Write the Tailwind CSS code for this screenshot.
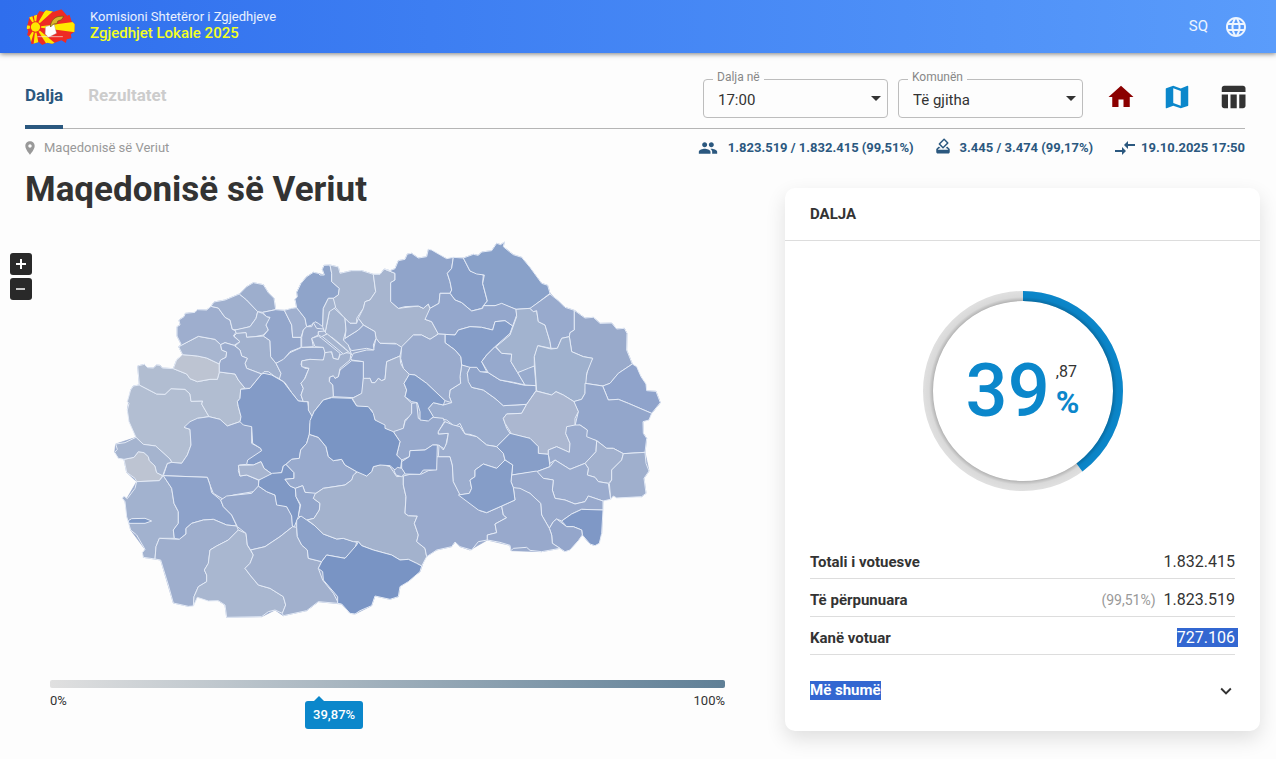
<!DOCTYPE html>
<html lang="sq">
<head>
<meta charset="utf-8">
<meta name="viewport" content="width=device-width, initial-scale=1">
<title>Zgjedhjet Lokale 2025</title>
<script src="https://cdn.jsdelivr.net/npm/@tailwindcss/browser@4"></script>
</head>
<body class="min-h-screen overflow-x-hidden bg-[#fdfdfd] font-[Roboto,sans-serif] text-[#333]">
<header class="flex h-[53px] items-center justify-between bg-linear-to-r from-[#2f6eed] to-[#5a9cfb] pr-7 pl-[25px] shadow-[0_1px_5px_rgba(0,0,0,0.5)]">
  <div class="flex items-center gap-3.5">
    <svg class="h-9 w-[51px]" viewBox="0 0 150 108" aria-hidden="true">
      <defs><clipPath id="flag"><path d="M8 40 12 25 35 17 42 6 55 9 62 4 85 8 108 1 125 20 132 17 138 36 148 46 147 68 136 76 138 88 124 91 121 102 108 94 80 104 65 101 50 108 40 99 18 106 13 84 5 78 8 66 3 57Z"/></clipPath></defs>
      <g clip-path="url(#flag)">
        <path fill="#ee2b24" d="M0 0h150v108H0z"/>
        <path fill="#ffe900" d="M30 54 0 48v14zM30 54 0 10 14 0zM30 54 22 0h15zM30 54 62 0h28zM30 54 150 38v32zM30 54 95 108H65zM30 54 24 108h16zM30 54 0 98l14 10z"/>
        <circle cx="30" cy="54" r="17" fill="#ee2b24"/><circle cx="30" cy="54" r="14" fill="#ffe900"/>
      </g>
      <path fill="#fff" stroke="#999" d="m60 53 26-7 7 27-24 12-10-10z"/>
      <path fill="#d8b72a" stroke="#665311" stroke-width="2" d="M75 48C80 28 93 20 115 22l-7 10-11 4-3 8-10 1-9 9z"/>
      <path stroke="#eee" stroke-width="2" d="M36 83h76"/>
    </svg>
    <div class="pb-1">
      <p class="text-[13px] leading-4 text-white/90">Komisioni Shtetëror i Zgjedhjeve</p>
      <p class="text-[15px] leading-4 font-medium text-[#f4ff1f]">Zgjedhjet Lokale 2025</p>
    </div>
  </div>
  <button type="button" class="flex items-center gap-4 text-[15px] text-white/90" aria-label="Gjuha: SQ">SQ
    <svg class="size-6 fill-current" viewBox="0 0 24 24"><path d="M11.99 2C6.47 2 2 6.48 2 12s4.47 10 9.99 10C17.52 22 22 17.52 22 12S17.52 2 11.99 2zm6.93 6h-2.95c-.32-1.25-.78-2.45-1.38-3.56 1.84.63 3.37 1.91 4.33 3.56zM12 4.04c.83 1.2 1.48 2.53 1.91 3.96h-3.82c.43-1.43 1.08-2.76 1.91-3.96zM4.26 14C4.1 13.36 4 12.69 4 12s.1-1.36.26-2h3.38c-.08.66-.14 1.32-.14 2 0 .68.06 1.34.14 2H4.26zm.82 2h2.95c.32 1.25.78 2.45 1.38 3.56-1.84-.63-3.37-1.9-4.33-3.56zm2.95-8H5.08c.96-1.66 2.49-2.93 4.33-3.56C8.81 5.55 8.35 6.75 8.03 8zM12 19.96c-.83-1.2-1.48-2.53-1.91-3.96h3.82c-.43 1.43-1.08 2.76-1.91 3.96zM14.34 14H9.66c-.09-.66-.16-1.32-.16-2 0-.68.07-1.35.16-2h4.68c.09.65.16 1.32.16 2 0 .68-.07 1.34-.16 2zm.25 5.56c.6-1.11 1.06-2.31 1.38-3.56h2.95c-.96 1.65-2.49 2.93-4.33 3.56zM16.36 14c.08-.66.14-1.32.14-2 0-.68-.06-1.34-.14-2h3.38c.16.64.26 1.31.26 2s-.1 1.36-.26 2h-3.38z"/></svg>
  </button>
</header>

<div class="mr-[31px] ml-[25px]">
  <div class="flex h-[76px] items-stretch justify-between border-b border-[#b5b5b5]">
    <nav class="-mb-px flex gap-[25px] text-[17px] font-bold">
      <a href="#dalja" class="border-b-4 border-[#2b587f] pt-[30px] leading-6 text-[#2b587f]">Dalja</a>
      <a href="#rezultatet" class="pt-[30px] leading-6 text-[#ccc]">Rezultatet</a>
    </nav>
    <div class="flex items-center pt-3">
      <div class="flex gap-2.5 pt-1">
        <div class="relative w-[185px]">
          <label for="ora" class="absolute -top-2.5 left-2.5 bg-[#fdfdfd] px-1 text-xs leading-4 text-[#888]">Dalja në</label>
          <select id="ora" class="h-[39px] w-full appearance-none rounded border border-[#bdbdbd] px-3.5 pt-1 text-[15px] text-[#333]"><option>17:00</option></select>
          <svg class="pointer-events-none absolute top-[17px] right-[7px] h-[5px] w-2.5 fill-[#333]" viewBox="0 0 10 5"><path d="M0 0h10L5 5z"/></svg>
        </div>
        <div class="relative w-[185px]">
          <label for="komuna" class="absolute -top-2.5 left-2.5 bg-[#fdfdfd] px-1 text-xs leading-4 text-[#888]">Komunën</label>
          <select id="komuna" class="h-[39px] w-full appearance-none rounded border border-[#bdbdbd] px-3.5 pt-1 text-[15px] text-[#333]"><option>Të gjitha</option></select>
          <svg class="pointer-events-none absolute top-[17px] right-[7px] h-[5px] w-2.5 fill-[#333]" viewBox="0 0 10 5"><path d="M0 0h10L5 5z"/></svg>
        </div>
      </div>
      <div class="-mr-[3px] ml-[23px] flex gap-[26px]">
        <a href="#kreu" aria-label="Kreu"><svg class="size-[30px] fill-[#8b0000]" viewBox="0 0 24 24"><path d="M10 20v-6h4v6h5v-8h3L12 3 2 12h3v8z"/></svg></a>
        <a href="#harta" aria-label="Harta"><svg class="size-[30px] fill-[#0b87cb]" viewBox="0 0 24 24"><path d="M20.5 3l-.16.03L15 5.1 9 3 3.36 4.9c-.21.07-.36.25-.36.48V20.5c0 .28.22.5.5.5l.16-.03L9 18.9l6 2.1 5.64-1.9c.21-.07.36-.25.36-.48V3.500c0-.28-.22-.5-.5-.5zM15 19l-6-2.110V5l6 2.110V19z"/></svg></a>
        <a href="#tabela" aria-label="Tabela"><svg class="size-[30px] fill-[#333]" viewBox="0 0 24 24"><path d="M10 10.020h5V21h-5V10.020zM17 21h3c1.100 0 2-.9 2-2v-9h-5v11zm3-18H5c-1.100 0-2 .9-2 2v3h19V5c0-1.100-.9-2-2-2zM3 19c0 1.100.9 2 2 2h3V10H3v9z"/></svg></a>
      </div>
    </div>
  </div>
  <div class="flex h-[37px] items-center justify-between text-[13px]">
    <a href="#mk" class="-ml-[3px] flex items-center gap-1.5 text-[#999]"><svg class="size-4 fill-current" viewBox="0 0 24 24"><path d="M12 2C8.130 2 5 5.130 5 9c0 5.250 7 13 7 13s7-7.750 7-13c0-3.870-3.130-7-7-7zm0 9.500c-1.380 0-2.500-1.120-2.500-2.500s1.120-2.500 2.500-2.500 2.500 1.120 2.500 2.500-1.120 2.500-2.500 2.500z"/></svg>Maqedonisë së Veriut</a>
    <div class="flex gap-5 font-bold text-[#2b587f]">
      <span class="flex items-center gap-2.5"><svg class="size-5 fill-current" viewBox="0 0 24 24"><path d="M16 11c1.660 0 2.990-1.340 2.990-3S17.660 5 16 5c-1.660 0-3 1.340-3 3s1.340 3 3 3zm-8 0c1.660 0 2.990-1.340 2.990-3S9.660 5 8 5C6.340 5 5 6.340 5 8s1.340 3 3 3zm0 2c-2.330 0-7 1.170-7 3.500V19h14v-2.500c0-2.330-4.670-3.500-7-3.500zm8 0c-.29 0-.62.02-.97.05 1.160.84 1.970 1.970 1.970 3.450V19h6v-2.500c0-2.330-4.670-3.500-7-3.500z"/></svg>1.823.519 / 1.832.415 (99,51%)</span>
      <span class="flex items-center gap-2"><svg class="mb-1 size-[18px] fill-current" viewBox="0 0 24 24"><path d="M18 13h-.68l-2 2h1.910L19 17H5l1.780-2h2.050l-2-2H6l-3 3v4c0 1.100.89 2 1.990 2H19c1.100 0 2-.89 2-2v-4l-3-3zm-1-5.050l-4.950 4.950-3.540-3.540 4.950-4.950L17 7.950zm-4.240-5.660L6.390 8.660c-.39.39-.39 1.020 0 1.410l4.950 4.950c.39.39 1.020.39 1.410 0l6.360-6.360c.39-.39.39-1.020 0-1.410L14.160 2.300c-.38-.4-1.010-.4-1.400-.01z"/></svg>3.445 / 3.474 (99,17%)</span>
      <span class="flex items-center gap-1"><svg class="size-6 fill-current" viewBox="0 0 24 24"><path d="M9.010 14H2v2h7.010v3L13 15l-3.990-4v3zm5.980-1v-3H22V8h-7.010V5L11 9l3.990 4z"/></svg>19.10.2025 17:50</span>
    </div>
  </div>
</div>

<main class="flex items-start gap-2.5 pr-4 pb-7">
  <section class="relative min-w-0 flex-1">
    <h1 class="pt-px pl-[25px] text-[35px] leading-[45px] font-bold">Maqedonisë së Veriut</h1>
    <div class="absolute top-[87px] left-2.5 z-10 flex flex-col gap-[3px]">
      <button type="button" aria-label="Zmadho" class="flex size-[22px] items-center justify-center rounded-[3px] bg-[#292929]"><svg class="size-2.5 stroke-white stroke-2" viewBox="0 0 10 10"><path d="M0 5h10M5 0v10"/></svg></button>
      <button type="button" aria-label="Zvogëlo" class="flex size-[22px] items-center justify-center rounded-[3px] bg-[#292929]"><svg class="size-2.5 stroke-white stroke-[1.5]" viewBox="0 0 10 10"><path d="M0 5h9"/></svg></button>
    </div>
    <svg class="mx-auto mt-[18px] block w-full max-w-[560px] translate-x-0.5" viewBox="0 0 1680 1200" role="img" aria-label="Harta e komunave">
      <path fill="#9aabcd" stroke="#9aabcd" stroke-width="2" d="M83 408 103 403 113 413 130 414 140 405 150 406 157 414 190 416 200 390 218 374 206 350 213 342 201 318 201 290 210 285 207 270 222 260 226 250 255 247 262 239 290 240 303 229 312 216 345 210 388 192 410 170 430 158 460 164 475 188 492 205 497 239 523 241 560 233 555 208 562 200 560 187 573 160 590 140 610 127 643 135 637 118 642 106 660 105 685 111 690 130 725 122 755 122 790 133 810 133 823 117 840 122 855 116 865 92 885 88 892 72 905 70 925 84 950 80 955 58 1010 86 1060 84 1090 73 1105 76 1115 66 1145 62 1160 40 1172 44 1183 36 1180 50 1210 74 1235 82 1295 160 1313 166 1320 190 1365 232 1393 241 1425 264 1450 262 1470 280 1505 279 1520 297 1543 295 1551 310 1550 360 1567 402 1593 440 1610 482 1638 484 1651 518 1625 550 1599 575 1600 610 1610 625 1605 667 1617 723 1602 745 1608 790 1595 800 1510 798 1479 813 1475 910 1455 947 1440 942 1417 915 1365 965 1350 955 1295 965 1203 962 1200 946 1132 930 1080 960 1050 950 1035 936 1025 950 980 960 945 982 930 1025 870 1070 865 1100 840 1108 795 1098 785 1127 735 1152 720 1150 695 1122 625 1115 590 1142 520 1157 495 1140 455 1160 350 1162 345 1125 325 1112 262 1102 235 1129 190 1119 152 990 100 982 105 958 62 900 45 815 80 755 50 727 42 688 14 667 17 642 78 622 52 540 62 480 70 468 88 465Z"/>
      <g stroke="#e3eaf6" stroke-width="3" stroke-linejoin="round">
        <!-- west -->
        <g>
          <path fill="#b2bed2" d="M88 465 140 492 165 493 183 476 225 478 240 492 243 514 278 513 275 522 297 560 262 565 245 580 222 592 240 598 243 645 232 675 215 700 185 697 180 687 137 648 100 643 78 622 57 575 52 540 57 520 52 515 62 480 70 468Z"/>
          <path fill="#b1bdd1" d="M83 408 103 403 113 413 130 414 140 405 150 406 157 414 190 416 230 432 240 446 262 455 300 448 322 448 328 426 375 432 385 450 405 475 392 478 390 505 382 515 385 530 393 560 390 575 352 588 330 568 297 560 275 522 278 513 243 514 240 492 225 478 183 476 165 493 140 492 88 465Z"/>
          <path fill="#bdc4d2" d="M190 416 200 390 218 374 262 378 290 384 328 402 328 426 322 448 300 448 262 455 240 446 230 432Z"/>
          <path fill="#a8b6d0" d="M206 350 265 319 315 328 332 344 335 360 350 366 348 382 332 390 328 402 290 384 262 378 218 374Z"/>
          <path fill="#9eaece" d="M206 350 213 342 201 318 201 290 210 285 207 270 222 260 226 250 255 247 262 239 290 240 303 229 325 234 345 262 360 270 367 298 380 304 370 318 390 335 372 346 345 338 332 344 315 328 265 319Z"/>
          <path fill="#a0b0ce" d="M303 229 312 216 345 210 388 192 410 210 443 245 438 265 420 290 380 300 367 298 360 270 345 262 325 234Z"/>
          <path fill="#9daecd" d="M388 192 410 170 430 158 460 164 475 188 492 205 497 239 458 247 443 245 410 210Z"/>
          <path fill="#a2b2cf" d="M443 245 458 250 470 260 480 262 477 275 468 285 475 300 460 315 435 320 410 322 408 308 380 312 375 300 420 290 438 265Z"/>
          <path fill="#a1b1ce" d="M380 310 408 308 410 322 435 320 460 318 480 332 482 380 498 400 513 430 510 447 495 440 475 425 462 425 455 432 410 415 405 400 412 385 395 378 390 360 375 348 390 335 372 318Z"/>
          <path fill="#9aabcd" d="M345 338 372 346 390 360 395 378 412 385 405 400 410 415 455 432 420 475 405 475 385 450 375 432 328 426 328 402 332 390 348 382 350 366 335 360 332 344Z"/>
          <path fill="#93a6cb" d="M458 247 497 239 523 241 545 285 548 322 573 322 573 352 540 365 520 390 498 400 482 380 480 332 460 318 475 300 468 285 480 262 470 260Z"/>
          <path fill="#a0b0cf" d="M523 241 545 235 560 233 585 265 590 290 580 300 573 322 548 322 545 285Z"/>
          <path fill="#98aacd" d="M498 400 520 388 540 368 575 352 640 352 645 362 643 388 630 393 600 388 575 393 573 405 585 415 597 415 582 450 573 460 580 475 573 495 580 515 565 513 545 488 525 458 508 447 513 430Z"/>
          <path fill="#96a8cc" d="M222 592 240 575 262 565 297 560 330 568 352 588 390 575 425 585 425 640 452 655 455 662 410 703 388 705 385 722 390 738 410 735 445 750 447 768 430 785 370 795 340 808 310 790 300 765 292 742 160 737 172 700 185 697 215 700 232 675 243 645 240 598Z"/>
          <path fill="#839bc7" d="M462 430 485 435 520 455 545 488 565 513 593 515 597 540 608 560 610 572 600 580 598 613 590 640 572 660 568 685 545 688 528 703 520 708 515 728 487 733 462 715 453 695 430 705 410 703 413 690 455 662 452 655 428 640 425 590 400 585 390 575 393 560 385 530 382 515 390 505 392 478 420 475 455 432Z"/>
          <path fill="#bdc4d2" d="M42 688 72 682 85 665 102 668 115 680 118 692 135 708 140 728 158 737 148 752 80 755 75 745 50 727Z"/>
          <path fill="#a5b4cf" d="M78 622 100 643 137 648 180 687 185 697 172 700 158 737 140 728 135 708 118 692 115 680 102 668 85 665 72 682 42 688 25 685 14 667 22 658 17 642 45 638Z"/>
          <path fill="#a2b2cf" d="M80 755 148 752 160 737 185 775 192 820 205 845 205 880 190 900 193 925 148 925 138 950 135 987 100 982 97 968 105 958 80 915 62 900 50 860 45 815 37 805 42 798 52 806 75 775Z"/>
          <path fill="#7f99c6" d="M55 872 65 866 105 865 125 873 105 880 57 880Z"/>
          <path fill="#8da2ca" d="M160 737 292 742 300 765 305 788 332 810 340 830 365 855 380 888 350 885 310 868 280 870 245 880 228 895 228 912 208 928 193 925 190 900 205 880 205 845 192 820 185 775Z"/>
          <path fill="#9eaecd" d="M135 987 138 950 148 925 208 928 228 912 228 895 245 880 280 870 310 868 350 885 380 888 385 900 355 930 320 948 300 960 295 1000 283 1020 290 1035 290 1055 265 1070 252 1100 250 1128 235 1129 190 1119 175 1065 152 990Z"/>
          <path fill="#a9b7d0" d="M385 900 408 910 412 945 430 975 420 1000 405 1015 420 1035 445 1065 480 1075 520 1100 527 1125 517 1150 495 1140 475 1145 455 1160 350 1162 345 1125 325 1112 295 1113 262 1102 250 1128 252 1100 265 1070 290 1055 290 1035 283 1020 295 1000 300 960 320 948 355 930Z"/>
          <path fill="#95a7cb" d="M332 810 350 798 425 790 445 768 470 785 495 795 500 820 530 830 545 855 548 890 510 920 465 950 422 960 412 945 408 910 382 890 365 855 340 830Z"/>
          <path fill="#a1b0cd" d="M422 960 465 950 510 920 548 890 560 892 562 920 575 945 592 960 595 985 635 995 625 1015 638 1050 670 1090 683 1115 683 1120 625 1115 590 1142 520 1157 517 1150 527 1125 520 1100 480 1075 445 1065 420 1035 405 1015 420 1000 430 975Z"/>
          <path fill="#a7b5d0" d="M385 706 430 705 453 695 462 715 487 733 475 740 447 750 410 735 390 738Z"/>
          <path fill="#7f98c5" d="M447 750 487 730 515 728 520 708 528 703 552 728 552 745 525 748 540 768 556 775 558 800 570 825 565 860 553 890 547 888 545 858 530 830 500 825 495 795 470 785 445 768Z"/>
          <path fill="#98aacd" d="M598 613 625 622 648 650 655 680 670 692 695 688 705 705 740 725 725 750 705 765 640 775 615 792 585 787 578 767 556 775 540 768 525 748 552 745 552 728 528 703 545 688 568 685 572 660 590 640Z"/>
          <path fill="#93a6cb" d="M556 775 578 767 585 787 620 790 610 805 630 820 628 840 612 865 590 870 565 858 572 825 558 800Z"/>
          <path fill="#8ba1c9" d="M560 892 560 870 573 858 590 870 612 885 640 912 680 927 700 925 740 937 735 955 705 985 650 975 635 995 595 985 592 960 575 945 562 920Z"/>
        </g>
        <!-- south centre -->
        <g transform="translate(540 570)">
          <path fill="#a3b2cd" d="M52 300 72 295 88 270 90 250 70 235 75 222 100 205 165 195 185 180 190 165 205 153 215 157 230 168 245 155 250 140 275 133 300 140 310 155 320 170 340 168 340 195 348 230 345 280 355 287 382 288 373 310 385 345 380 365 405 385 410 410 395 438 380 430 355 418 330 420 305 405 250 390 215 377 205 365 190 365 160 355 140 357 100 342 72 315Z"/>
          <path fill="#7994c4" d="M95 425 110 405 165 415 200 375 205 365 215 377 250 390 305 405 330 420 355 418 380 430 395 438 390 455 355 485 330 500 325 530 300 538 255 528 245 557 210 572 195 582 180 580 155 552 143 550 143 530 100 480 98 455 85 445Z"/>
          <path fill="#98a9cc" d="M340 168 360 163 395 162 415 152 438 148 440 110 480 110 487 135 490 185 510 222 570 272 590 278 635 258 640 285 650 293 615 312 620 338 592 345 592 360 565 365 545 390 510 380 495 366 485 380 440 390 410 410 405 385 380 365 385 345 373 310 382 288 355 287 345 280 348 230 340 195Z"/>
        </g>
        <!-- north -->
        <g transform="translate(540 0)">
          <path fill="#8fa4ca" d="M20 233 15 208 22 200 20 187 33 160 50 140 70 127 85 130 90 135 103 135 97 118 102 106 120 105 125 130 125 155 148 175 145 195 130 205 115 205 100 235 98 290 85 280 75 275 65 285 50 290 45 265Z"/>
          <path fill="#a8b6cf" d="M120 105 145 111 150 130 185 122 215 122 250 133 257 185 240 210 225 215 220 235 200 265 200 280 180 280 160 260 130 225 130 205 145 195 148 175 125 155 125 130Z"/>
          <path fill="#a7b5cf" d="M250 133 270 133 283 117 315 130 315 150 302 158 302 215 325 235 385 228 400 235 415 222 420 235 415 255 405 268 425 275 445 312 420 328 395 315 370 315 335 352 315 340 270 340 258 325 255 305 220 285 205 265 220 235 225 215 240 210 257 185Z"/>
          <path fill="#90a4ca" d="M283 117 300 122 315 116 325 92 345 88 352 72 365 70 385 84 410 80 415 58 425 60 470 86 490 82 485 115 472 130 480 155 485 180 480 190 450 190 447 220 420 235 415 222 400 235 385 228 345 230 325 235 302 215 302 158 315 150 315 130Z"/>
          <path fill="#879ec8" d="M490 82 520 84 540 123 580 135 578 160 592 213 575 235 545 243 515 218 495 210 480 190 485 180 480 155 472 130 485 115Z"/>
          <path fill="#89a1c9" d="M520 84 550 73 565 76 575 66 605 62 620 40 632 44 643 36 640 50 658 65 670 74 695 82 720 112 755 160 773 166 780 190 722 235 678 238 635 222 620 227 580 227 592 213 578 160 583 135 560 132 540 123Z"/>
          <path fill="#94a7cc" d="M420 235 447 220 450 190 480 190 495 210 515 218 545 243 578 235 580 227 615 227 635 220 678 238 680 255 668 288 645 272 615 275 608 300 575 292 540 290 505 300 495 315 445 312 425 275 405 268Z"/>
          <path fill="#859dc8" d="M465 313 495 315 505 300 540 290 575 292 608 300 615 275 645 272 668 288 660 310 615 350 590 375 575 395 590 425 570 427 560 412 545 420 530 410 515 405 512 380 495 360 465 338Z"/>
          <path fill="#9badce" d="M485 518 478 500 480 480 512 460 510 440 515 405 540 412 532 430 545 472 580 480 615 505 640 527 710 523 695 550 650 552 640 565 650 595 660 610 620 650 590 645 560 620 540 613 525 612 510 580 495 590 470 570 430 562 415 535 430 518 460 525Z"/>
          <path fill="#9aabcd" d="M335 350 370 315 395 315 420 328 445 312 465 313 465 338 495 360 512 380 515 405 510 440 512 460 480 480 478 500 485 518 465 512 410 460 375 435 358 433 340 415 332 385Z"/>
          <path fill="#90a4ca" d="M540 412 560 412 570 425 595 428 630 450 700 465 738 467 738 482 710 523 640 527 615 505 580 480 545 472 535 455 532 430Z"/>
          <path fill="#98aacd" d="M183 385 190 370 230 360 250 360 258 325 270 340 320 342 335 352 330 378 290 395 285 448 275 452 265 445 255 458 245 458 240 445 220 448 220 395 185 390Z"/>
          <path fill="#8fa3ca" d="M185 392 220 395 220 450 218 490 190 503 130 500 128 465 118 455 120 440 132 437 135 445 145 440 150 420Z"/>
          <path fill="#a4b3cf" d="M60 388 100 390 105 368 115 362 125 368 130 385 145 388 150 375 165 368 183 370 180 390 150 415 145 440 135 445 130 437 118 442 118 455 128 465 130 500 100 510 72 545 68 562 55 540 55 515 40 515 33 495 40 475 33 460 45 445 57 415 35 410 35 393Z"/>
          <path fill="#98aacd" d="M165 325 205 300 220 285 255 305 258 325 250 345 252 360 230 355 185 362 160 330Z"/>
          <path fill="#a5b4cf" d="M130 232 165 265 168 300 160 330 175 345 185 375 165 355 130 325 105 310 110 285 118 245Z"/>
          <path fill="#a5b4cf" d="M130 205 115 205 100 235 98 290 105 310 118 245 137 232Z"/>
          <path fill="#9fafce" d="M165 265 180 280 200 280 205 265 220 285 205 300 165 325 168 300Z"/>
          <path fill="#9dadcd" d="M50 290 65 290 70 278 80 295 100 297 103 305 85 305 85 315 65 325 70 350 35 352 35 322 40 300Z"/>
          <path fill="#a0b0ce" d="M65 325 85 318 95 325 150 370 145 388 130 385 125 365 105 368 100 352 75 350Z"/>
          <path fill="#a5b4cf" d="M95 318 112 312 175 365 160 372Z"/>
          <path fill="#a3b2cf" d="M85 305 103 303 110 312 95 320 85 315Z"/>
          <path fill="#a6b4cf" d="M330 378 332 400 340 415 358 433 342 460 350 480 345 500 365 520 365 555 345 570 340 595 310 608 285 595 265 580 255 570 245 540 200 528 187 505 215 490 220 445 240 445 245 458 255 458 265 445 275 452 285 448 290 395Z"/>
          <path fill="#97a9cc" d="M310 605 340 595 345 575 365 550 365 520 380 518 385 565 410 572 430 562 460 565 463 575 445 605 445 612 475 610 465 658 445 645 428 645 405 660 360 662 358 680 335 690 320 675 330 635Z"/>
          <path fill="#829bc7" d="M358 433 375 435 410 460 465 512 460 525 430 518 415 535 430 560 415 573 390 570 390 545 382 518 365 515 345 500 350 480 342 460Z"/>
          <path fill="#7a95c4" d="M60 572 72 545 100 510 125 503 185 505 200 528 235 530 250 550 255 570 285 585 285 595 310 605 330 635 320 675 335 690 332 715 315 720 300 707 270 705 250 710 245 725 230 738 200 725 165 705 155 688 130 692 115 680 108 650 85 622 58 613Z"/>
          <path fill="#859cc8" d="M335 695 358 680 360 662 405 660 428 645 442 645 440 720 400 720 390 733 345 732 335 715Z"/>
          <path fill="#97a9cc" d="M312 722 322 712 335 715 345 730 335 740 318 735Z"/>
          <path fill="#9cadce" d="M445 605 465 575 490 585 510 590 525 612 560 620 590 645 620 650 640 670 645 690 620 715 580 702 555 720 555 740 540 750 545 775 538 790 510 795 490 755 487 705 480 680 445 680 447 645 460 660 470 640 475 610 445 612Z"/>
        </g>
        <!-- north east -->
        <g transform="translate(1080 0)">
          <path fill="#96a9cd" d="M75 350 95 370 125 372 123 395 143 428 165 465 130 457 90 450 55 428 35 395 50 375Z"/>
          <path fill="#a2b3cf" d="M138 238 180 235 190 245 200 242 205 275 225 285 240 335 243 355 205 347 193 380 193 408 175 420 143 428 123 395 125 372 95 370 78 350 120 315 140 260Z"/>
          <path fill="#98abcd" d="M143 428 175 415 193 408 198 467 165 465Z"/>
          <path fill="#98aacd" d="M180 235 240 192 265 212 285 232 313 241 313 300 300 308 298 320 275 325 262 355 243 355 240 335 225 285 205 275 200 242 190 245Z"/>
          <path fill="#99aacb" d="M313 241 345 264 370 262 390 280 425 279 440 297 463 295 471 310 470 360 487 402 445 430 420 460 400 468 345 460 355 410 368 385 340 380 305 365 298 320 300 308 313 300Z"/>
          <path fill="#9fb1ce" d="M203 347 243 357 262 355 275 325 298 320 305 365 340 380 368 385 350 430 345 490 335 508 312 515 280 495 258 485 245 495 200 483 193 380Z"/>
          <path fill="#8fa3cb" d="M487 402 500 410 513 440 528 462 530 482 558 484 571 518 545 550 475 520 445 508 415 510 398 468 420 460 445 430Z"/>
          <path fill="#93a6cb" d="M345 460 398 468 415 510 445 508 475 520 545 550 537 570 519 575 520 610 530 625 525 667 460 671 430 655 410 655 380 632 345 622 352 600 330 585 315 588 325 545 310 515 335 508 345 490Z"/>
          <path fill="#abb7d0" d="M198 483 245 495 258 485 280 495 312 515 325 545 315 565 315 588 297 590 287 610 300 640 298 667 260 650 235 660 235 673 205 670 205 650 180 625 125 612 105 580 100 565 110 552 155 550 170 523Z"/>
        </g>
        <!-- south east -->
        <g transform="translate(1080 570)">
          <path fill="#9bacce" d="M287 40 290 20 315 15 330 15 352 30 350 50 380 62 378 95 345 130 300 148 255 120 240 130 235 103 235 90 260 80 298 97 300 70Z"/>
          <path fill="#879ec8" d="M80 80 120 40 180 55 205 80 205 100 235 103 240 140 200 155 125 165 128 135 105 120 100 100Z"/>
          <path fill="#a2b1ce" d="M380 62 410 85 430 85 460 101 455 120 425 150 425 180 415 190 385 185 375 172 352 165 355 145 345 130 378 95Z"/>
          <path fill="#9fafcd" d="M460 101 525 97 528 130 537 153 522 175 528 220 515 230 440 234 430 228 422 238 418 190 425 180 425 150 455 120Z"/>
          <path fill="#9bacce" d="M200 155 240 140 255 120 300 148 345 130 355 145 352 165 375 172 385 185 415 190 422 238 399 243 355 228 345 245 315 252 285 240 255 235 247 210 250 180 220 175Z"/>
          <path fill="#98a9cc" d="M125 165 200 153 220 175 250 180 247 210 255 235 285 240 315 252 345 245 355 228 399 243 399 270 335 268 305 282 275 303 260 297 250 305 238 325 215 285 212 250 180 220 130 203 123 185Z"/>
          <path fill="#7f98c6" d="M275 303 305 282 335 268 399 270 395 340 388 370 375 377 360 372 337 345 335 330 310 320 290 320Z"/>
          <path fill="#94a6cb" d="M238 325 250 305 260 297 290 320 310 320 335 330 337 345 325 362 300 390 285 395 270 385 247 370 245 345Z"/>
          <path fill="#98a9cc" d="M130 203 150 205 180 220 212 250 215 285 238 325 245 345 247 370 270 385 215 395 180 391 170 382 130 385 123 392 120 376 90 367 52 360 52 345 80 338 75 312 110 293 100 285 95 258 135 240Z"/>
          <path fill="#859dc8" d="M15 150 40 132 80 145 105 120 128 135 123 185 130 203 135 240 95 258 50 278 25 270-35 225-2 220 5 205 0 180 15 170Z"/>
        </g>
      </g>
    </svg>
    <div class="mt-[50px] px-[50px] text-[13px] leading-4">
      <div class="h-2 rounded-xs bg-linear-to-r from-[#e0e0e0] to-[#5f7f96]"></div>
      <div class="mt-[5px] flex justify-between"><span>0%</span><span>100%</span></div>
      <div class="relative h-5">
        <div class="absolute -top-[13px] -translate-x-[14px]" style="left:39.87%">
          <svg class="ml-[9px] h-[5px] w-2.5 fill-[#0b87cb]" viewBox="0 0 10 5"><path d="M5 0l5 5H0z"/></svg>
          <div class="flex h-7 w-[58px] items-center justify-center rounded-[3px] bg-[#0b87cb] font-medium text-white">39,87%</div>
        </div>
      </div>
    </div>
  </section>

  <section class="mt-[22px] w-[475px] shrink-0 rounded-[10px] bg-white pb-7 shadow-[0_8px_20px_rgba(0,0,0,0.12)]">
    <h2 class="border-b border-[#ddd] px-[25px] text-[15px] leading-[52px] font-bold">DALJA</h2>
    <div class="flex justify-center pt-[50px]">
      <div class="relative">
        <svg class="size-[200px]" viewBox="0 0 200 200" aria-hidden="true">
          <defs><radialGradient id="shade" gradientUnits="userSpaceOnUse" cx="100" cy="100" r="100"><stop offset=".9" stop-color="#000" stop-opacity=".2"/><stop offset=".94" stop-color="#000" stop-opacity=".03"/><stop offset="1" stop-color="#000" stop-opacity="0"/></radialGradient></defs>
          <g fill="none" stroke-width="10">
            <circle cx="100" cy="100" r="95" stroke="#e0e0e0"/>
            <circle cx="100" cy="100" r="95" stroke="#0b87cb" pathLength="100" stroke-dasharray="39.870 100" transform="rotate(-90 100 100)"/>
            <circle cx="100" cy="100" r="95" stroke="url(#shade)"/>
          </g>
        </svg>
        <div class="absolute inset-0 flex items-center justify-center gap-1.5 text-[#0b87cb]">
          <span class="text-[74px] leading-none font-medium">39</span>
          <span class="flex flex-col pt-0.5"><span class="text-base leading-5 text-[#333]">,87</span><span class="text-[32px] leading-10 font-bold">%</span></span>
        </div>
      </div>
    </div>
    <table class="mx-[25px] mt-[49px] w-[425px] text-base">
      <tbody>
        <tr class="h-[38px] border-b border-[#ddd]"><th scope="row" class="pt-1.5 text-left text-[15px] font-bold">Totali i votuesve</th><td class="pt-1.5 text-right">1.832.415</td></tr>
        <tr class="h-[38px] border-b border-[#ddd]"><th scope="row" class="pt-1.5 text-left text-[15px] font-bold">Të përpunuara</th><td class="pt-1.5 text-right"><span class="mr-2 text-sm text-[#999]">(99,51%)</span>1.823.519</td></tr>
        <tr class="h-[38px] border-b border-[#ddd]"><th scope="row" class="pt-1.5 text-left text-[15px] font-bold">Kanë votuar</th><td class="pt-1.5 text-right"><span class="-mr-[3px] bg-[#3367d1] pr-[3px] text-white">727.106</span></td></tr>
      </tbody>
    </table>
    <button type="button" class="mx-[25px] mt-6 flex h-6 w-[425px] items-center justify-between text-[15px] font-bold"><span class="bg-[#3367d1] leading-[19px] text-white">Më shumë</span><svg class="-mr-0.5 size-[22px] fill-[#333]" viewBox="0 0 24 24"><path d="M16.590 8.590L12 13.170 7.410 8.590 6 10l6 6 6-6z"/></svg></button>
  </section>
</main>
</body>
</html>
